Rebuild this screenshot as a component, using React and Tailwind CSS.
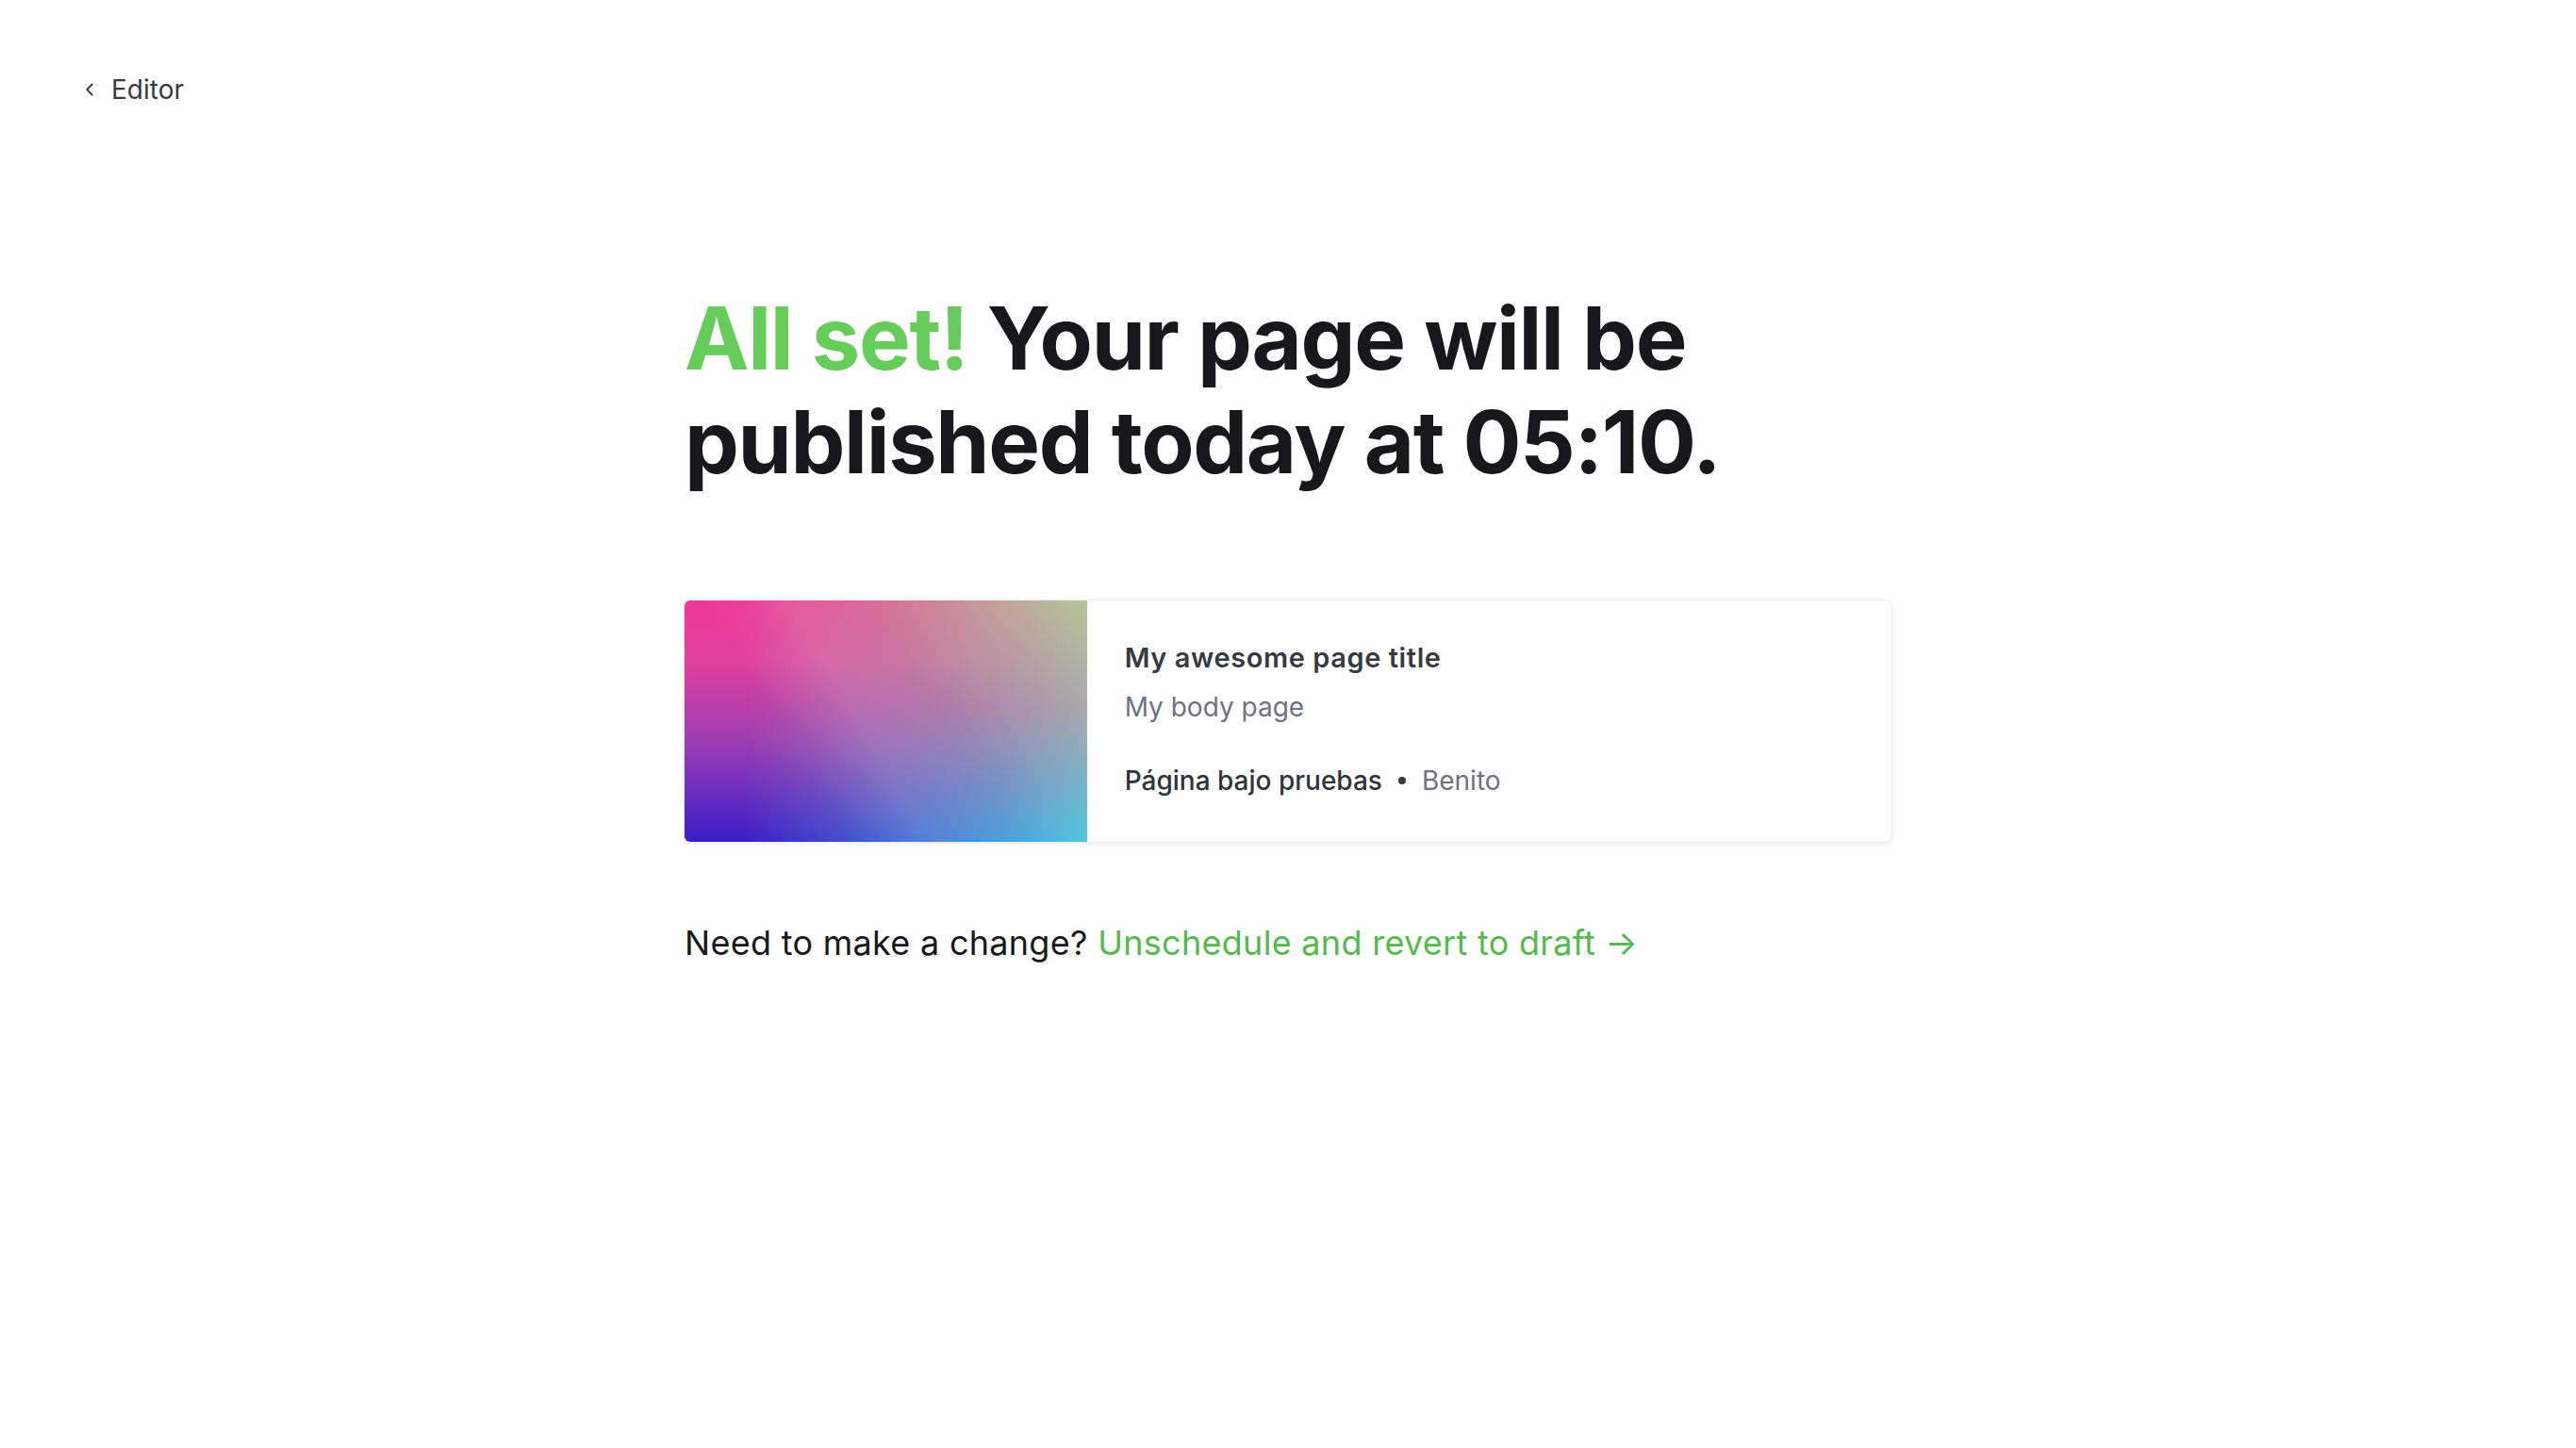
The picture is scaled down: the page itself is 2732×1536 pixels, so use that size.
import { ChevronLeft } from 'lucide-react';

const font = { fontFamily: 'Inter, "Noto Sans", sans-serif' };

function Preview() {
  return (
    <div className="flex h-[256px] w-full overflow-hidden rounded-[6px] bg-white shadow-[0_1px_5px_rgba(0,0,0,0.12)] ring-1 ring-[#eeeef0]">
      {/* cover picture: bilinear gradient made of two stacked layers */}
      <div className="relative w-1/3 shrink-0 bg-[linear-gradient(to_bottom,#ee3896_0%,#e0409e_25%,#9a3cb4_60%,#3a1ec8_100%)]">
        <div className="absolute inset-0 bg-[linear-gradient(to_bottom,#b4c79a_0%,#a8a8ac_45%,#7ab4c8_75%,#50c9df_100%)] [mask-image:linear-gradient(to_right,transparent_15%,black_100%)]" />
        <div className="absolute inset-0 bg-[linear-gradient(60deg,transparent_30%,rgba(255,255,255,0.08)_45%,transparent_60%)]" />
      </div>
      <div className="flex flex-col pl-[40px] pt-[41px] text-[28px] leading-[40px]">
        <div className="text-[29px] font-semibold tracking-[0.02em] text-[#363b42]">My awesome page title</div>
        <div className="mt-[12px] text-[#6b7380]">My body page</div>
        <div className="mt-[38px] flex items-center">
          <span className="font-medium text-[#2f343b]">Página bajo pruebas</span>
          <span className="mx-[17px] h-[8px] w-[8px] rounded-full bg-[#363b42]" />
          <span className="text-[#6b7380]">Benito</span>
        </div>
      </div>
    </div>
  );
}

export default function App() {
  return (
    <div className="min-h-screen bg-white text-[#17181c]" style={font}>
      <div className="pl-[84px] pt-[75px]">
        <a href="#" className="inline-flex items-center gap-[12px] text-[28px] leading-[40px] text-[#363b42]">
          <ChevronLeft size={22} strokeWidth={2} />
          Editor
        </a>
      </div>

      <div className="mx-auto w-[1280px] pt-[189px]">
        <h1 className="text-[92px] font-bold leading-[110px] tracking-[-0.015em]">
          <span className="text-[#66cc5a]">All set!</span> Your page will be published today at 05:10.
        </h1>

        <div className="mt-[113px]">
          <Preview />
        </div>

        <p className="mt-[80px] text-[36px] leading-[54px] tracking-[0.008em] text-[#17181c]">
          Need to make a change?{' '}
          <a href="#" className="text-[#55b94d]">
            Unschedule and revert to draft →
          </a>
        </p>
      </div>
    </div>
  );
}
